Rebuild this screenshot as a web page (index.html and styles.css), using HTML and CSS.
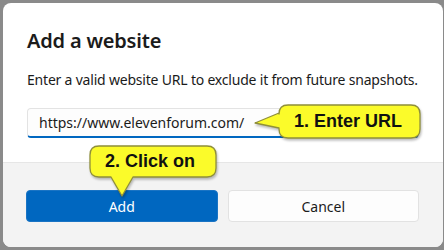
FILE: index.html
```html
<!DOCTYPE html>
<html>
<head>
<meta charset="utf-8">
<link rel="stylesheet" href="styles.css">
</head>
<body>
<div class="dialog">
  <div class="content">
    <h1 class="title">Add a website</h1>
    <p class="desc">Enter a valid website URL to exclude it from future snapshots.</p>
    <div class="field">https://www.elevenforum.com/</div>
  </div>
  <div class="footer">
    <button class="btn primary">Add</button>
    <button class="btn secondary">Cancel</button>
  </div>
</div>

<div class="callout callout-url">
  <svg class="bubble" width="170" height="40" viewBox="0 0 170 40">
    <path d="M35 2 H158 Q167 2 167 11 V26 Q167 35 158 35 H35 Q26 35 26 26 V25 L2 20 L26 10 V11 Q26 2 35 2 Z"/>
  </svg>
  <span class="callout-text">1. Enter URL</span>
</div>

<div class="callout callout-add">
  <svg class="bubble" width="132" height="56" viewBox="0 0 132 56">
    <path d="M11 2 H119 Q128 2 128 11 V24 Q128 33 119 33 H45 L34 52 L23 33 H11 Q2 33 2 24 V11 Q2 2 11 2 Z"/>
  </svg>
  <span class="callout-text">2. Click on</span>
</div>
</body>
</html>
```

FILE: styles.css
```css
html, body {
  margin: 0;
  padding: 0;
}
body {
  width: 444px;
  height: 250px;
  overflow: hidden;
  background: #8a8a8a;
  font-family: "Noto Sans", "Open Sans", sans-serif;
  color: #1b1b1b;
  padding: 3px 0 0 3px;
  box-sizing: border-box;
}
.dialog {
  width: 440px;
  height: 244px;
  background: #ffffff;
  border-radius: 8px;
  overflow: hidden;
  display: flex;
  flex-direction: column;
}
.content {
  padding: 0 24px;
  height: 160px;
  flex: none;
  box-sizing: border-box;
  border-bottom: 1px solid #e6e6e6;
}
.title {
  margin: 0;
  padding-top: 24px;
  font-size: 20px;
  font-weight: 600;
  line-height: 28px;
  letter-spacing: -0.2px;
}
.desc {
  margin: 15px 0 0;
  font-size: 14px;
  line-height: 20px;
  letter-spacing: -0.2px;
}
.field {
  margin-top: 18px;
  height: 30px;
  box-sizing: border-box;
  border: 1px solid #e3e3e3;
  border-bottom: 2px solid #0067c0;
  border-radius: 4px;
  padding: 0 11px;
  font-size: 14px;
  line-height: 27px;
  background: #fdfdfd;
}
.footer {
  flex: 1;
  background: #f3f3f3;
  padding: 27px 24px 0 23px;
  display: grid;
  grid-template-columns: 1fr 1fr;
  gap: 10px;
  align-items: start;
}
.btn {
  height: 32px;
  border-radius: 4px;
  font-family: inherit;
  font-size: 14px;
  cursor: pointer;
}
.primary {
  background: #0067c0;
  color: #ffffff;
  border: 1px solid #1a74c4;
}
.secondary {
  background: #fdfdfd;
  color: #1b1b1b;
  border: 1px solid #e2e2e2;
}
.callout {
  position: absolute;
}
.bubble {
  display: block;
  filter: drop-shadow(1px 2px 1px rgba(0,0,0,0.25));
}
.bubble path {
  fill: #fbfb2a;
  stroke: #8f8f3a;
  stroke-width: 1.3;
  stroke-linejoin: round;
}
.callout-text {
  position: absolute;
  font-family: "Liberation Sans", Arial, sans-serif;
  font-weight: bold;
  font-size: 18px;
  color: #111;
  white-space: nowrap;
}
.callout-url {
  left: 253px;
  top: 103px;
}
.callout-url .callout-text {
  left: 41px;
  top: 8px;
}
.callout-add {
  left: 88px;
  top: 144px;
}
.callout-add .callout-text {
  left: 17px;
  top: 7px;
}
```
